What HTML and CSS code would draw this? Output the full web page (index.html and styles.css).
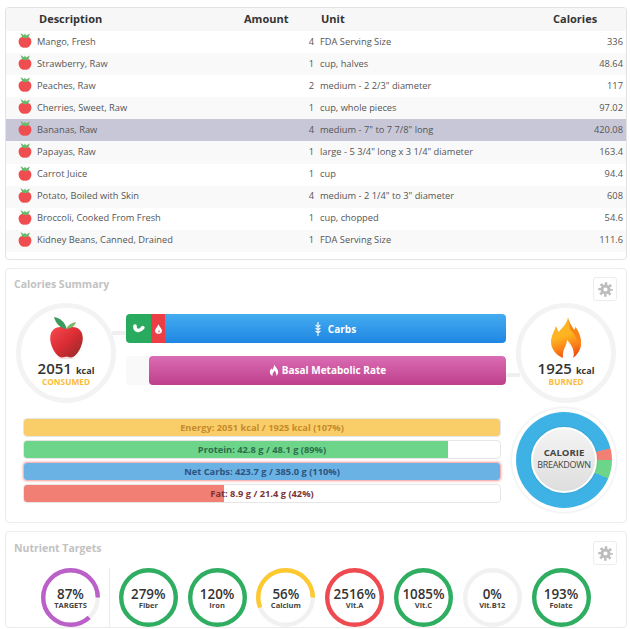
FILE: index.html
```html
<!DOCTYPE html>
<html lang="en">
<head>
    <meta charset="UTF-8">
    <meta name="viewport" content="width=device-width, initial-scale=1.0">
    <title>Diary Summary</title>
    <link rel="stylesheet" href="styles.css">
</head>
<body>
    <!-- Shared icons -->
    <svg class="icon-defs" width="0" height="0">
        <defs>
            <symbol id="food-apple" viewBox="0 0 14 15">
                <path d="M7 4.4 C9 3.4 13.4 3.6 13.4 8.6 C13.4 12 10.6 14.8 8.6 14.8 C7.8 14.8 7.4 14.4 7 14.4 C6.6 14.4 6.2 14.8 5.4 14.8 C3.4 14.8 0.6 12 0.6 8.6 C0.6 3.6 5 3.4 7 4.4 Z" fill="#ef4d4f"/>
                <path d="M2.4 0 L6 2.2 L7 0.6 L8 2.4 L12 0.4 L10.2 4.4 L7.4 5.2 L4.4 4.4 Z" fill="#66b96b"/>
            </symbol>
            <symbol id="gear" viewBox="0 0 20 20">
                <circle cx="10" cy="10" r="7.8" fill="none" stroke="#bdbdbd" stroke-width="3.8" pathLength="48" stroke-dasharray="3.2 2.8" stroke-dashoffset="1.6"/>
                <circle cx="10" cy="10" r="4.8" fill="none" stroke="#bdbdbd" stroke-width="4"/>
            </symbol>
            <symbol id="small-flame" viewBox="0 0 12 14">
                <path d="M6 0 C7 3 11 5 11 9.5 C11 12.5 9 14 8.4 14 C9.4 12 8.6 9.8 6.4 7.6 C6.4 9.6 3.6 10.6 4.4 14 C2.6 13.6 1 12 1 9.4 C1 7.4 2 6.6 2.8 5 C3.4 5.8 3.6 6.4 3.8 7 C5 5 6.4 3 6 0 Z" fill="#fff"/>
            </symbol>
            <linearGradient id="apple-skin" x1="0.1" y1="0.1" x2="0.9" y2="0.9">
                <stop offset="0" stop-color="#f2444a"/>
                <stop offset="0.5" stop-color="#da2c33"/>
                <stop offset="1" stop-color="#9d2c2c"/>
            </linearGradient>
            <linearGradient id="flame-skin" x1="0.35" y1="0" x2="0.6" y2="1">
                <stop offset="0" stop-color="#fcb32c"/>
                <stop offset="0.45" stop-color="#fdb520"/>
                <stop offset="0.75" stop-color="#fa7f16"/>
                <stop offset="1" stop-color="#f0480f"/>
            </linearGradient>
        </defs>
    </svg>

    <!-- Diary table -->
    <section class="card table-card">
        <table class="food-table">
            <colgroup>
                <col class="col-icon"><col class="col-desc"><col class="col-amount"><col class="col-unit"><col class="col-cal">
            </colgroup>
            <thead>
                <tr>
                    <th></th>
                    <th class="th-desc">Description</th>
                    <th>Amount</th>
                    <th class="th-unit">Unit</th>
                    <th>Calories</th>
                </tr>
            </thead>
            <tbody>
                <tr>
                    <td class="td-icon"><svg class="row-apple"><use href="#food-apple"/></svg></td>
                    <td>Mango, Fresh</td><td class="num">4</td><td>FDA Serving Size</td><td class="num">336</td>
                </tr>
                <tr>
                    <td class="td-icon"><svg class="row-apple"><use href="#food-apple"/></svg></td>
                    <td>Strawberry, Raw</td><td class="num">1</td><td>cup, halves</td><td class="num">48.64</td>
                </tr>
                <tr>
                    <td class="td-icon"><svg class="row-apple"><use href="#food-apple"/></svg></td>
                    <td>Peaches, Raw</td><td class="num">2</td><td>medium - 2 2/3" diameter</td><td class="num">117</td>
                </tr>
                <tr>
                    <td class="td-icon"><svg class="row-apple"><use href="#food-apple"/></svg></td>
                    <td>Cherries, Sweet, Raw</td><td class="num">1</td><td>cup, whole pieces</td><td class="num">97.02</td>
                </tr>
                <tr class="selected">
                    <td class="td-icon"><svg class="row-apple"><use href="#food-apple"/></svg></td>
                    <td>Bananas, Raw</td><td class="num">4</td><td>medium - 7" to 7 7/8" long</td><td class="num">420.08</td>
                </tr>
                <tr>
                    <td class="td-icon"><svg class="row-apple"><use href="#food-apple"/></svg></td>
                    <td>Papayas, Raw</td><td class="num">1</td><td>large - 5 3/4" long x 3 1/4" diameter</td><td class="num">163.4</td>
                </tr>
                <tr>
                    <td class="td-icon"><svg class="row-apple"><use href="#food-apple"/></svg></td>
                    <td>Carrot Juice</td><td class="num">1</td><td>cup</td><td class="num">94.4</td>
                </tr>
                <tr>
                    <td class="td-icon"><svg class="row-apple"><use href="#food-apple"/></svg></td>
                    <td>Potato, Boiled with Skin</td><td class="num">4</td><td>medium - 2 1/4" to 3" diameter</td><td class="num">608</td>
                </tr>
                <tr>
                    <td class="td-icon"><svg class="row-apple"><use href="#food-apple"/></svg></td>
                    <td>Broccoli, Cooked From Fresh</td><td class="num">1</td><td>cup, chopped</td><td class="num">54.6</td>
                </tr>
                <tr>
                    <td class="td-icon"><svg class="row-apple"><use href="#food-apple"/></svg></td>
                    <td>Kidney Beans, Canned, Drained</td><td class="num">1</td><td>FDA Serving Size</td><td class="num">111.6</td>
                </tr>
            </tbody>
        </table>
    </section>

    <!-- Calories summary -->
    <section class="card summary-card">
        <div class="card-head">
            <h2>Calories Summary</h2>
            <button class="gear-btn"><svg class="gear-icon"><use href="#gear"/></svg></button>
        </div>

        <div class="balance">
            <div class="kcal-circle consumed">
                <svg class="big-icon" viewBox="0 0 33 42">
                    <ellipse cx="16.5" cy="41" rx="9" ry="1.2" fill="#f3dede"/>
                    <path d="M16.5 11.5 C21 8.6 32.6 8.8 32.8 21 C32.8 30 26 40.4 21 40.4 C19 40.4 18 39.8 16.5 39.8 C15 39.8 14 40.4 12 40.4 C7 40.4 0.2 30 0.2 21 C0.4 8.8 12 8.6 16.5 11.5 Z" fill="url(#apple-skin)"/>
                    <path d="M4 0 C10 1 15 5 16.6 11.6 C11 12 6 7 4 0 Z" fill="#3c9a5f"/>
                    <path d="M16 11.8 C18 8 21.6 5.6 26 5 C25 8.6 21.6 11.6 16 11.8 Z" fill="#7cb86a"/>
                </svg>
                <div class="kcal-line"><span class="kcal-num">2051</span> <span class="kcal-unit">kcal</span></div>
                <div class="kcal-label">CONSUMED</div>
            </div>

            <div class="energy-bars">
                <div class="energy-bar">
                    <div class="seg seg-protein">
                        <svg class="seg-icon-arm" viewBox="0 0 12 10"><path d="M2 2 C1.6 6.6 6 8.4 9.8 3.6" fill="none" stroke="#fff" stroke-width="3.6" stroke-linecap="round"/></svg>
                    </div>
                    <div class="seg seg-fat">
                        <svg class="seg-icon-drop" viewBox="0 0 8 11"><path d="M4 0 C5 3 8 5 8 7.4 C8 9.6 6.2 11 4 11 C1.8 11 0 9.6 0 7.4 C0 5 3 3 4 0 Z" fill="#fff"/><path d="M4.6 6 C5.2 7 5.6 7.6 5.6 8.2 C5.6 9 5 9.6 4.4 9.6 C3.8 9.6 3.4 9 3.6 8.2 C3.8 7.6 4.4 7 4.6 6 Z" fill="#f08a8c"/></svg>
                    </div>
                    <div class="seg seg-carbs">
                        <svg class="seg-icon-wheat" viewBox="0 0 6 14"><path d="M3 0 V14 M0.6 3 L3 5 L5.4 3 M0.6 6 L3 8 L5.4 6 M0.6 9 L3 11 L5.4 9" fill="none" stroke="#fff" stroke-width="1.1"/></svg>
                        <span>Carbs</span>
                    </div>
                </div>
                <div class="energy-bar">
                    <div class="seg seg-spare"></div>
                    <div class="seg seg-bmr">
                        <svg class="seg-icon-flame"><use href="#small-flame"/></svg>
                        <span>Basal Metabolic Rate</span>
                    </div>
                </div>
            </div>

            <div class="kcal-circle burned">
                <svg class="big-icon" viewBox="0 0 33 42">
                    <path d="M18 0 C19 6 22 9 24 13 C25 12 25.5 11 25.5 10 C29 15 31 20 31 26 C31 33 27 38 23 41 C25 36 23 29 17 23 C17 29 12 32 13 41 C6 38 1 32 1 25 C1 19 4 15 6 9 C7 11 8 13 8.5 15 C12 11 17 7 18 0 Z" fill="url(#flame-skin)"/>
                    <path d="M18 0 C19 6 22 9 24 13 C25 12 25.5 11 25.5 10 C29 15 31 20 31 26 C31 28 30.6 30 30 31 C29 24 24 17 20 12 C19.4 8 18.4 4 18 0 Z" fill="#f9851a"/>
                </svg>
                <div class="kcal-line"><span class="kcal-num">1925</span> <span class="kcal-unit">kcal</span></div>
                <div class="kcal-label">BURNED</div>
            </div>
        </div>

        <div class="macros">
            <div class="meters">
                <div class="meter meter-energy">
                    <div class="meter-fill" style="width: 100%"></div>
                    <div class="meter-text">Energy: 2051 kcal / 1925 kcal (107%)</div>
                </div>
                <div class="meter meter-protein">
                    <div class="meter-fill" style="width: 89%"></div>
                    <div class="meter-text">Protein: 42.8 g / 48.1 g (89%)</div>
                </div>
                <div class="meter meter-carbs">
                    <div class="meter-fill" style="width: 100%"></div>
                    <div class="meter-text">Net Carbs: 423.7 g / 385.0 g (110%)</div>
                </div>
                <div class="meter meter-fat">
                    <div class="meter-fill" style="width: 42%"></div>
                    <div class="meter-text">Fat: 8.9 g / 21.4 g (42%)</div>
                </div>
            </div>

            <div class="donut-frame">
                <div class="donut">
                    <div class="donut-hub">
                        <strong>CALORIE</strong>
                        <span>BREAKDOWN</span>
                    </div>
                </div>
            </div>
        </div>
    </section>

    <!-- Nutrient targets -->
    <section class="card targets-card">
        <div class="card-head">
            <h2>Nutrient Targets</h2>
            <button class="gear-btn"><svg class="gear-icon"><use href="#gear"/></svg></button>
        </div>

        <div class="rings">
            <div class="ring-main">
                <div class="ring">
                    <svg viewBox="0 0 59 59"><circle class="ring-track" cx="29.5" cy="29.5" r="27.3"/><circle class="ring-arc" cx="29.5" cy="29.5" r="27.3" pathLength="100" stroke="#bb5fc9" stroke-dasharray="87 13" stroke-dashoffset="87"/></svg>
                    <div class="ring-text"><b>87%</b><span class="ring-caps">TARGETS</span></div>
                </div>
            </div>
            <div class="ring">
                <svg viewBox="0 0 59 59"><circle class="ring-arc" cx="29.5" cy="29.5" r="27.3" stroke="#2fae62"/></svg>
                <div class="ring-text"><b>279%</b><span>Fiber</span></div>
            </div>
            <div class="ring">
                <svg viewBox="0 0 59 59"><circle class="ring-arc" cx="29.5" cy="29.5" r="27.3" stroke="#2fae62"/></svg>
                <div class="ring-text"><b>120%</b><span>Iron</span></div>
            </div>
            <div class="ring">
                <svg viewBox="0 0 59 59"><circle class="ring-track" cx="29.5" cy="29.5" r="27.3"/><circle class="ring-arc" cx="29.5" cy="29.5" r="27.3" pathLength="100" stroke="#fdc92f" stroke-dasharray="56 44" stroke-dashoffset="56"/></svg>
                <div class="ring-text"><b>56%</b><span>Calcium</span></div>
            </div>
            <div class="ring">
                <svg viewBox="0 0 59 59"><circle class="ring-arc" cx="29.5" cy="29.5" r="27.3" stroke="#ef4a50"/></svg>
                <div class="ring-text"><b>2516%</b><span>Vit.A</span></div>
            </div>
            <div class="ring">
                <svg viewBox="0 0 59 59"><circle class="ring-arc" cx="29.5" cy="29.5" r="27.3" stroke="#2fae62"/></svg>
                <div class="ring-text"><b>1085%</b><span>Vit.C</span></div>
            </div>
            <div class="ring">
                <svg viewBox="0 0 59 59"><circle class="ring-track" cx="29.5" cy="29.5" r="27.3"/></svg>
                <div class="ring-text"><b>0%</b><span>Vit.B12</span></div>
            </div>
            <div class="ring">
                <svg viewBox="0 0 59 59"><circle class="ring-arc" cx="29.5" cy="29.5" r="27.3" stroke="#2fae62"/></svg>
                <div class="ring-text"><b>193%</b><span>Folate</span></div>
            </div>
        </div>
    </section>
</body>
</html>
```

FILE: styles.css
```css
html, body {
    height: 629px;
    overflow: hidden;
}

body {
    font-family: "Open Sans", Arial, sans-serif;
    margin: 0;
    padding: 7px 3px 0 5px;
    background-color: #fff;
    color: #333;
}

.icon-defs {
    display: block;
    height: 0;
}

.card {
    border: 1px solid #ececec;
    border-radius: 4px;
    margin-bottom: 8px;
    background-color: #fff;
}

/* Diary table */
.table-card {
    height: 253px;
    box-sizing: border-box;
    border-color: #e2e2e2;
    overflow: hidden;
}

.food-table {
    width: 100%;
    table-layout: fixed;
    border-collapse: collapse;
    font-size: 9.3px;
    color: #555;
}

.col-icon { width: 31px; }
.col-desc { width: 207px; }
.col-amount { width: 76px; }
.col-unit { width: 233px; }
.col-cal { width: 73px; }

.food-table th {
    height: 21px;
    padding: 0 0 2px;
    background-color: #f7f7f7;
    color: #333;
    font-size: 11px;
    font-weight: 700;
    text-align: left;
}

.food-table .th-desc { padding-left: 2px; }
.food-table .th-unit { padding-left: 1px; }

.food-table td {
    height: 20.1px;
    padding: 0 0 2px;
    white-space: nowrap;
}

.food-table tbody tr:nth-child(even) {
    background-color: #f9f9f9;
}

.food-table tbody tr.selected {
    background-color: #c8c7d8;
}

.food-table .num {
    text-align: right;
    padding-right: 6px;
}

.food-table td:last-child {
    padding-right: 3px;
}

.food-table .td-icon {
    vertical-align: top;
    height: 20.1px;
    padding: 2px 0 0;
}

.row-apple {
    display: block;
    width: 14px;
    height: 15px;
    margin: 0 0 0 12px;
}

/* Card headings */
.card-head {
    display: flex;
    justify-content: space-between;
    align-items: flex-start;
    padding: 8px 9px 0 8px;
}

.targets-card .card-head {
    padding-top: 9px;
}

.card-head h2 {
    margin: 0;
    font-size: 10.5px;
    line-height: 14px;
    font-weight: 700;
    color: #c2c2c2;
}

.gear-btn {
    display: flex;
    align-items: center;
    justify-content: center;
    width: 24px;
    height: 24px;
    padding: 0;
    border: 1px solid #ececec;
    border-radius: 3px;
    background-color: #fff;
}

.gear-icon {
    width: 15px;
    height: 15px;
}

/* Consumed / burned */
.balance {
    display: flex;
    gap: 10px;
    padding: 2px 10px 0;
}

.kcal-circle {
    position: relative;
    flex: none;
    box-sizing: border-box;
    width: 100px;
    height: 100px;
    border: 5px solid #f3f3f3;
    border-radius: 50%;
    display: flex;
    flex-direction: column;
    align-items: center;
    padding-top: 9px;
}

.kcal-circle::after {
    content: "";
    position: absolute;
    width: 14px;
    height: 4px;
    background-color: #efefef;
}

.consumed::after {
    top: 23px;
    right: -15px;
}

.burned::after {
    top: 65px;
    left: -15px;
}

.big-icon {
    width: 33px;
    height: 42px;
    flex: none;
}

.kcal-line {
    margin-top: 1px;
    line-height: 16px;
    white-space: nowrap;
    color: #333;
}

.kcal-num {
    font-size: 15px;
    font-weight: 600;
}

.kcal-unit {
    font-size: 9px;
    font-weight: 700;
}

.kcal-label {
    margin-top: -2px;
    font-size: 8.3px;
    line-height: 9px;
    font-weight: 700;
    color: #fbbc3c;
}

.energy-bars {
    flex: 1;
    display: flex;
    flex-direction: column;
    gap: 13px;
    padding-top: 11px;
}

.energy-bar {
    display: flex;
    height: 29px;
    border-radius: 4px;
    overflow: hidden;
    color: #fff;
    font-size: 10px;
    font-weight: 700;
}

.seg {
    display: flex;
    align-items: center;
    justify-content: center;
    gap: 7px;
    flex: none;
}

.seg-protein { width: 25px; background-color: #29ab5f; }
.seg-fat { width: 14px; background-color: #ec3f45; }
.seg-carbs { flex: 1; background: linear-gradient(#44acf0, #1f86e2); }
.seg-spare { width: 23px; background-color: #f9f9f9; }
.seg-bmr { flex: 1; gap: 3px; padding-bottom: 1px; box-sizing: border-box; background: linear-gradient(#da6db4, #bf3f8b); border-radius: 4px; }

.seg-icon-arm { width: 12px; height: 10px; }
.seg-icon-drop { width: 7px; height: 10px; }
.seg-icon-wheat { width: 6px; height: 14px; }
.seg-icon-flame { width: 10px; height: 12px; }

/* Macro meters */
.macros {
    display: flex;
    align-items: center;
    gap: 11px;
    padding: 5px 10px 10px 17px;
}

.meters {
    width: 478px;
    flex: none;
    display: flex;
    flex-direction: column;
    gap: 3px;
}

.meter {
    display: grid;
    box-sizing: border-box;
    height: 19px;
    border: 1px solid #e6e6e6;
    border-radius: 4px;
    overflow: hidden;
    background-color: #fff;
}

.meter > div {
    grid-area: 1 / 1;
}

.meter-text {
    font-size: 9.3px;
    line-height: 17px;
    font-weight: 700;
    text-align: center;
    white-space: nowrap;
}

.meter-energy .meter-fill { background-color: #f9ce68; }
.meter-energy .meter-text { color: #c78a2c; }
.meter-protein .meter-fill { background-color: #6dd58a; }
.meter-protein .meter-text { color: #2c6e4a; }
.meter-carbs { border-color: #f9b4b4; box-shadow: 0 0 3px #f9a8a8; }
.meter-carbs .meter-fill { background-color: #6ab1e4; }
.meter-carbs .meter-text { color: #2b5480; }
.meter-fat .meter-fill { background-color: #f17f74; }
.meter-fat .meter-text { color: #7d3434; }

/* Calorie donut */
.donut-frame {
    flex: none;
    box-sizing: border-box;
    width: 104px;
    height: 104px;
    padding: 4px;
    border-radius: 50%;
    background-color: #fff;
    box-shadow: 0 0 3px rgba(0,0,0,0.15);
}

.donut {
    width: 96px;
    height: 96px;
    border-radius: 50%;
    display: flex;
    align-items: center;
    justify-content: center;
    background: conic-gradient(from 90deg, #6dd58a 0 6.3%, #3fb2e5 6.3% 96%, #f17f74 96% 100%);
}

.donut-hub {
    box-sizing: border-box;
    width: 66px;
    height: 66px;
    padding-bottom: 2px;
    border: 2px solid #fff;
    border-radius: 50%;
    display: flex;
    flex-direction: column;
    align-items: center;
    justify-content: center;
    background: linear-gradient(#f4f4f4, #dedede);
    box-shadow: 0 0 2px rgba(0,0,0,0.2);
    color: #444;
}

.donut-hub strong {
    font-size: 9.6px;
    line-height: 12px;
    font-weight: 700;
}

.donut-hub span {
    font-size: 9px;
    line-height: 12px;
    letter-spacing: -0.3px;
    white-space: nowrap;
}

/* Nutrient rings */
.rings {
    display: flex;
    gap: 9.8px;
    padding: 3px 0 0 35px;
}

.ring-main {
    display: flex;
    padding-right: 9px;
    margin-right: -1px;
    border-right: 1px solid #ececec;
}

.ring {
    display: grid;
    flex: none;
    width: 59px;
    height: 59px;
}

.ring > * {
    grid-area: 1 / 1;
}

.ring svg {
    display: block;
    width: 59px;
    height: 59px;
}

.ring-track,
.ring-arc {
    fill: none;
    stroke-width: 4.4;
}

.ring-track {
    stroke: #f1f1f1;
}

.ring-text {
    display: flex;
    flex-direction: column;
    align-items: center;
    justify-content: center;
    padding-top: 2px;
    color: #333;
}

.ring-text b {
    font-size: 13.4px;
    line-height: 14px;
    font-weight: 600;
}

.ring-text span {
    font-size: 7.5px;
    line-height: 9px;
    font-weight: 700;
    color: #444;
}
```
